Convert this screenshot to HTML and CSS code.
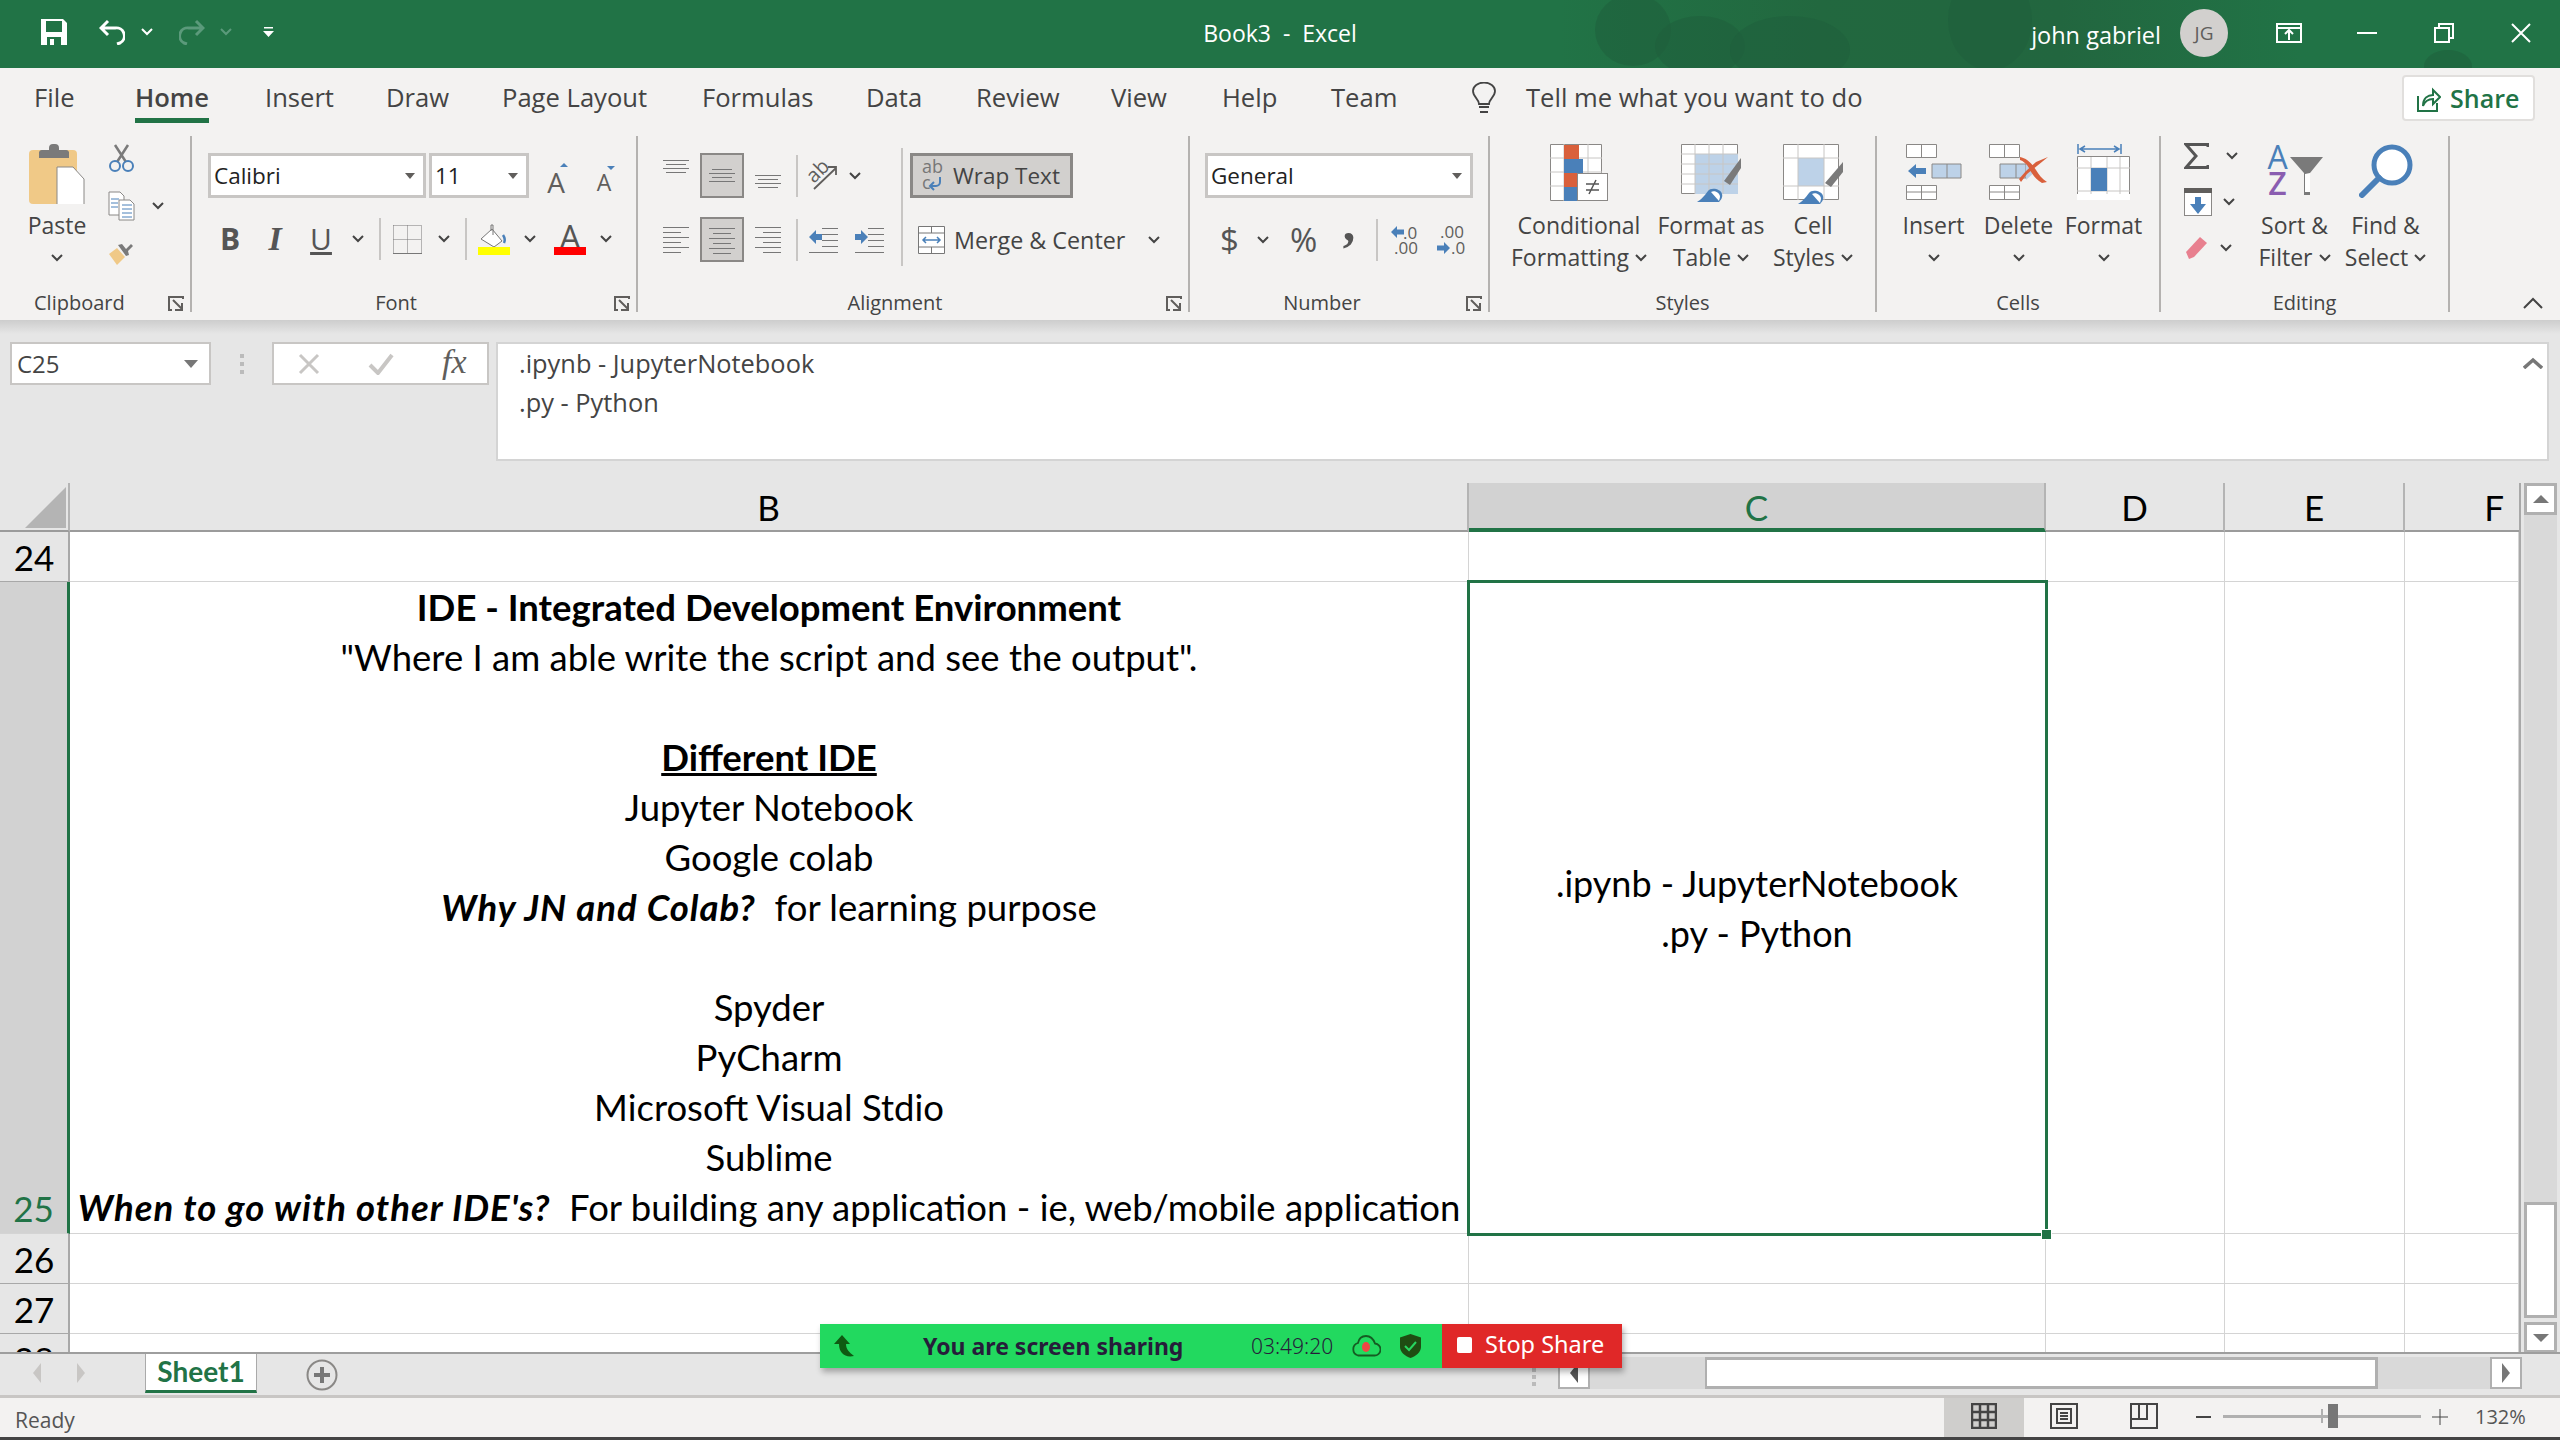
FILE: index.html
```html
<!DOCTYPE html>
<html lang="en">
<head>
<meta charset="utf-8">
<title>Book3 - Excel</title>
<link rel="stylesheet" href="styles.css">
</head>
<body>
<svg class="defs" width="0" height="0">
  <symbol id="chev" viewBox="0 0 12 8"><path d="M1 1l5 5 5-5" fill="none" stroke="currentColor" stroke-width="2"/></symbol>
  <symbol id="launch" viewBox="0 0 16 16"><path d="M15 3V1H1v13h3" fill="none" stroke="#605e5c" stroke-width="2"/><path d="M5 4l9 9M14 7v7H7" fill="none" stroke="#605e5c" stroke-width="2"/></symbol>
</svg>
<div class="app">
  <header class="titlebar">
    <svg class="decor" width="2560" height="68"><g fill="#1f5f3c" fill-opacity=".55"><ellipse cx="1633" cy="30" rx="38" ry="36"/><ellipse cx="1700" cy="46" rx="45" ry="30"/><ellipse cx="1790" cy="50" rx="60" ry="34"/><ellipse cx="1990" cy="20" rx="42" ry="50"/><ellipse cx="2448" cy="66" rx="24" ry="16"/></g></svg>
    <div class="qat">
      <svg width="26" height="26" viewBox="0 0 26 26"><path d="M0 0h22l4 4v22H0z" fill="#fff"/><rect x="5" y="2" width="16" height="11" fill="#217346"/><rect x="6" y="18" width="14" height="8" fill="#217346"/><rect x="9" y="20" width="4" height="6" fill="#fff"/></svg>
      <svg class="ml32" width="26" height="26" viewBox="0 0 26 26"><path d="M9 2L2 9l7 7M2 9h14a8 8 0 0 1 5 15l-3 1" fill="none" stroke="#fff" stroke-width="3"/></svg>
      <svg class="chev-w ml16" width="12" height="8"><use href="#chev"/></svg>
      <svg class="ml26" width="26" height="26" viewBox="0 0 26 26"><path d="M17 2l7 7-7 7M24 9H10a8 8 0 0 0-5 15l3 1" fill="none" stroke="#5b9a7b" stroke-width="3"/></svg>
      <svg class="chev-d ml15" width="12" height="8"><use href="#chev"/></svg>
      <svg class="ml31" width="12" height="10" viewBox="0 0 12 10"><path d="M1 0h9v1.500H1zM0 4h11l-5.500 6z" fill="#fff"/></svg>
    </div>
    <div class="doc">Book3&nbsp; - &nbsp;Excel</div>
    <div class="win">
      <span class="user">john gabriel</span>
      <span class="avatar">JG</span>
      <svg class="ml48" width="26" height="20" viewBox="0 0 26 20"><path d="M1 1h24v18H1zM1 5h24M13 17V8M9 11l4-4 4 4" fill="none" stroke="#fff" stroke-width="2"/></svg>
      <svg class="ml55" width="20" height="20" viewBox="0 0 20 20"><path d="M0 10h20" stroke="#fff" stroke-width="2"/></svg>
      <svg class="ml57" width="20" height="20" viewBox="0 0 20 20"><path d="M1 5h14v14H1zM5 5V1h14v14h-4" fill="none" stroke="#fff" stroke-width="2"/></svg>
      <svg class="ml57" width="20" height="20" viewBox="0 0 20 20"><path d="M1 1l18 18M19 1L1 19" stroke="#fff" stroke-width="2"/></svg>
    </div>
  </header>

  <nav class="tabs">
    <span>File</span><span class="tab-on">Home</span><span>Insert</span><span>Draw</span><span>Page Layout</span><span>Formulas</span><span>Data</span><span>Review</span><span>View</span><span>Help</span><span>Team</span>
    <svg width="24" height="32" viewBox="0 0 24 32"><path d="M7 22c0-5-6-7-6-13a11 8.500 0 0 1 22 0c0 6-6 8-6 13z" fill="none" stroke="#444" stroke-width="1.800"/><path d="M7 25h10M8 30h8" stroke="#444" stroke-width="2"/></svg>
    <span class="tell">Tell me what you want to do</span>
    <button class="share">
      <svg width="24" height="28" viewBox="0 0 24 28"><path d="M1 12v15h19v-8" fill="none" stroke="#217346" stroke-width="2"/><path d="M6 22c0-8 5-11 10-11V6l7 7-7 7v-5c-5 0-8 2-10 7z" fill="none" stroke="#217346" stroke-width="2"/></svg>
      <span>Share</span>
    </button>
  </nav>

  <section class="ribbon">
    <div class="grp g-clip">
      <div class="body pl20">
        <div class="big w74">
          <div class="big-ic">
            <svg width="56" height="60" viewBox="0 0 56 60"><rect y="6" width="48" height="54" rx="4" fill="#f0c987"/><path d="M10 14v-6a3 3 0 0 1 3-2h7V4a4 4 0 0 1 4-4h2a4 4 0 0 1 4 4v2h7a3 3 0 0 1 3 2v6z" fill="#7a7a7a"/><path d="M28 27h16l11 12v32H28z" transform="translate(0 -4)" fill="#fff" stroke="#8a8886"/></svg>
          </div>
          <div class="big-t">Paste</div>
          <div class="big-t cc"><svg width="12" height="8"><use href="#chev"/></svg></div>
        </div>
        <div class="tools ml14">
          <svg width="27" height="28" viewBox="0 0 27 28"><path d="M7 1l11 17M20 1L9 18" stroke="#7a7a7a" stroke-width="2.500"/><circle cx="7" cy="22" r="5" fill="none" stroke="#4a80b9" stroke-width="2"/><circle cx="20" cy="22" r="5" fill="none" stroke="#4a80b9" stroke-width="2"/></svg>
          <div class="tool-row mt19">
            <svg width="27" height="30" viewBox="0 0 27 30"><path d="M1 1h11l4 4v19H1z" fill="#fff" stroke="#8a8886"/><path d="M11 9h11l4 4v16H11z" fill="#fff" stroke="#8a8886"/><path d="M3 8h8M3 12h7M3 16h7M14 14h10M14 18h10M14 22h10M14 26h10" stroke="#4a80b9"/></svg>
            <svg class="ml17" width="12" height="8"><use href="#chev"/></svg>
          </div>
          <svg class="mt22" width="26" height="22" viewBox="0 0 26 22"><path d="M1 11l8-6 8 9-8 8z" fill="#f0c987"/><path d="M11 3l4-1 4 5 5-5 2 2-5 5 1 4-3 1z" transform="translate(-1 -1)" fill="#7a7a7a"/></svg>
        </div>
      </div>
      <div class="label lab-clip">Clipboard</div>
      <svg class="launch" width="16" height="16"><use href="#launch"/></svg>
    </div>

    <div class="grp g-font">
      <div class="body col pl16 pt17">
        <div class="row">
          <div class="combo w218"><span>Calibri</span><i class="caret"></i></div>
          <div class="combo w100 ml3"><span>11</span><i class="caret"></i></div>
          <div class="afont a-lg ml15">A<i class="tri up"></i></div>
          <div class="afont a-sm ml25">A<i class="tri dn"></i></div>
        </div>
        <div class="row mt20">
          <b class="fmt ml7">B</b>
          <i class="fmt fmt-i ml15">I</i>
          <u class="fmt fmt-u ml16">U</u>
          <svg class="ml16" width="12" height="8"><use href="#chev"/></svg>
          <span class="vsep ml15"></span>
          <svg class="ml12" width="29" height="29" viewBox="0 0 29 29"><path d="M.500.500h28M.500 14.500h28M.500.500v28M14.500.500v28M28.500.500v28" stroke="#777" stroke-dasharray="1 1" fill="none"/><path d="M0 28.500h29" stroke="#777"/></svg>
          <svg class="ml16" width="12" height="8"><use href="#chev"/></svg>
          <span class="vsep ml15"></span>
          <svg class="ml11" width="32" height="32" viewBox="0 0 32 32"><path d="M3 16L14 6l10 12-8 6z" fill="#fff" stroke="#777"/><path d="M13 8V2h2v10" fill="none" stroke="#777"/><path d="M25 12c2 3 2 6 1 8" stroke="#4a80b9" stroke-width="2.500" fill="none"/><rect y="24" width="32" height="8" fill="#ff0"/></svg>
          <svg class="ml14" width="12" height="8"><use href="#chev"/></svg>
          <div class="color-a ml18">A<i></i></div>
          <svg class="ml14" width="12" height="8"><use href="#chev"/></svg>
        </div>
      </div>
      <div class="label lab-font">Font</div>
      <svg class="launch" width="16" height="16"><use href="#launch"/></svg>
    </div>

    <div class="grp g-align">
      <div class="body pl25">
        <div class="al-left pt17">
          <div class="row">
            <svg width="26" height="45" viewBox="0 0 26 45"><path d="M0 7.500h26M3 11.500h20M0 15.500h26M3 19.500h20" stroke="#777"/></svg>
            <div class="al-on ml11"><svg width="26" height="41" viewBox="0 0 26 41"><path d="M3 14.500h20M0 18.500h26M3 22.500h20M0 26.500h26" stroke="#777"/></svg></div>
            <svg class="ml11" width="26" height="45" viewBox="0 0 26 45"><path d="M0 22.500h26M3 26.500h20M0 30.500h26M3 34.500h20" stroke="#777"/></svg>
            <span class="vsep ml15"></span>
            <svg class="ml11 ovis" width="29" height="28" viewBox="0 0 29 28"><path d="M5 27L27 6M19 5h8v8" fill="none" stroke="#605e5c" stroke-width="1.800"/><text class="svg-ab" x="-2" y="15" transform="rotate(-45 10 10)">ab</text></svg>
            <svg class="ml11" width="12" height="8"><use href="#chev"/></svg>
          </div>
          <div class="row mt19">
            <svg width="26" height="45" viewBox="0 0 26 45"><path d="M0 11.500h26M0 16.500h18M0 21.500h26M0 26.500h18M0 31.500h26M0 36.500h18" stroke="#777" transform="translate(0 -1)"/></svg>
            <div class="al-on ml11"><svg width="26" height="41" viewBox="0 0 26 41"><path d="M0 9.500h26M4 14.500h18M0 19.500h26M4 24.500h18M0 29.500h26M4 34.500h18" stroke="#777"/></svg></div>
            <svg class="ml11" width="26" height="45" viewBox="0 0 26 45"><path d="M0 10.500h26M8 15.500h18M0 20.500h26M8 25.500h18M0 30.500h26M8 35.500h18" stroke="#777"/></svg>
            <span class="vsep ml15"></span>
            <svg class="ml11" width="29" height="28" viewBox="0 0 29 28"><path d="M13 2.500h16M13 8.500h16M13 14.500h16M13 20.500h16M0 26.500h29" stroke="#777"/><path d="M0 11l7-7v4h6v6H7v4z" fill="#4a80b9"/></svg>
            <svg class="ml17" width="29" height="28" viewBox="0 0 29 28"><path d="M13 2.500h16M13 8.500h16M13 14.500h16M13 20.500h16M0 26.500h29" stroke="#777"/><path d="M13 11L6 4v4H0v6h6v4z" fill="#4a80b9"/></svg>
          </div>
        </div>
        <span class="al-sep"></span>
        <div class="al-right pt17">
          <div class="wrap">
            <svg class="ovis" width="21" height="32" viewBox="0 0 21 32"><text class="svg-ab2" x="0" y="13">ab</text><text class="svg-ab2" x="0" y="29">c</text><path d="M18 17v5a4 4 0 0 1-4 4H8M12 22l-4 4 4 4" fill="none" stroke="#4a80b9" stroke-width="2"/></svg>
            <span>Wrap Text</span>
          </div>
          <div class="merge mt19">
            <svg width="27" height="28" viewBox="0 0 27 28"><path d="M.500.500h26v27H.500zM.500 7h26M.500 21h26M13.500.500V7M13.500 21v6.500" fill="#fff" stroke="#777"/><path d="M5 14h17M8 11l-3 3 3 3M19 11l3 3-3 3" fill="none" stroke="#4a80b9" stroke-width="1.500"/></svg>
            <span class="ml9">Merge &amp; Center</span>
            <svg class="ml23" width="12" height="8"><use href="#chev"/></svg>
          </div>
        </div>
      </div>
      <div class="label lab-align">Alignment</div>
      <svg class="launch" width="16" height="16"><use href="#launch"/></svg>
    </div>

    <div class="grp g-num">
      <div class="body col pl15 pt17">
        <div class="combo w268"><span>General</span><i class="caret"></i></div>
        <div class="row mt19 h45">
          <span class="sym w14 ml15">$</span>
          <svg class="ml23" width="12" height="8"><use href="#chev"/></svg>
          <span class="sym w26 ml21">%</span>
          <b class="sym w14 ml26 comma">,</b>
          <span class="vsep ml20"></span>
          <svg class="ml13 ovis" width="28" height="30" viewBox="0 0 28 30"><path d="M0 7l6-6v3.500h7v5H6V13z" fill="#4a80b9"/><text class="svg-n" x="12" y="14">.0</text><text class="svg-n" x="3" y="29">.00</text></svg>
          <svg class="ml18 ovis" width="28" height="30" viewBox="0 0 28 30"><text class="svg-n" x="3" y="13">.00</text><path d="M13 23l-6-6v3.500H0v5h7V29z" fill="#4a80b9"/><text class="svg-n" x="14" y="29">.0</text></svg>
        </div>
      </div>
      <div class="label lab-num">Number</div>
      <svg class="launch" width="16" height="16"><use href="#launch"/></svg>
    </div>

    <div class="grp g-styles">
      <div class="body pl10">
        <div class="big w158">
          <div class="big-ic">
            <svg width="58" height="58" viewBox="0 0 58 58"><path d="M.500.500h51v56H.500z" fill="#fff" stroke="#8a8886"/><path d="M14 0v57M38 0v57M0 14h52M0 28h52M0 42h52" stroke="#c8c6c4"/><rect x="14" y="1" width="15" height="14" fill="#d9603c"/><rect x="14" y="15" width="19" height="14" fill="#4a80b9"/><rect x="14" y="29" width="20" height="14" fill="#d9603c"/><rect x="14" y="43" width="13" height="14" fill="#4a80b9"/><rect x="27.500" y="40.500" width="30" height="27" transform="translate(0 -11)" fill="#fff" stroke="#8a8886"/><path d="M36 45h13M36 51h13M39 55l7-14" stroke="#555" stroke-width="1.500" transform="translate(0 -5)"/></svg>
          </div>
          <div class="big-t">Conditional</div>
          <div class="big-t">Formatting <svg class="ml6 up1" width="12" height="8"><use href="#chev"/></svg></div>
        </div>
        <div class="big w102 ml2">
          <div class="big-ic">
            <svg width="61" height="58" viewBox="0 0 61 58"><path d="M.500.500h56v49H.500z" fill="#fff" stroke="#8a8886"/><rect x="14" y="10" width="43" height="40" fill="#bdd2e8"/><path d="M14 0v50M28 0v50M42 0v50M0 10h57M0 20h57M0 30h57M0 40h57" stroke="#c8c6c4"/><path d="M43 37L60 14v10L49 41z" fill="#7a7a7a"/><path d="M16 58c4-2 8-7 11-11 3-4 13-2 14 3 1 3-1 6-3 8z" fill="#4a80b9"/><path d="M30 48c4-2 9 1 9 5l-1 4z" fill="#fff"/></svg>
          </div>
          <div class="big-t">Format as</div>
          <div class="big-t">Table <svg class="ml6 up1" width="12" height="8"><use href="#chev"/></svg></div>
        </div>
        <div class="big w102">
          <div class="big-ic">
            <svg width="60" height="60" viewBox="0 0 60 60"><path d="M.500.500h55v55H.500z" fill="#fff" stroke="#8a8886"/><rect x="15" y="14" width="26" height="28" fill="#bdd2e8"/><path d="M15 0v56M41 0v56M0 14h56M0 42h56" stroke="#c8c6c4"/><path d="M42 39L60 18v10L48 43z" fill="#7a7a7a"/><path d="M15 60c4-2 8-7 11-11 3-4 13-2 14 3 1 3-1 6-3 8z" fill="#4a80b9"/><path d="M29 50c4-2 9 1 9 5l-1 4z" fill="#fff"/></svg>
          </div>
          <div class="big-t">Cell</div>
          <div class="big-t">Styles <svg class="ml6 up1" width="12" height="8"><use href="#chev"/></svg></div>
        </div>
      </div>
      <div class="label">Styles</div>
    </div>

    <div class="grp g-cells">
      <div class="body pl14">
        <div class="big w85">
          <div class="big-ic">
            <svg width="56" height="56" viewBox="0 0 56 56"><g fill="#fff" stroke="#8a8886"><path d="M.500.500h30v13H.500zM15.500.500v13M.500 41.500h30v14H.500zM.500 48h30M15.500 41.500v14"/></g><path d="M26 20h29v14H26zM41 20v14" fill="#bdd2e8" stroke="#8a8886"/><path d="M2 27l8-7v4h10v6H10v4z" fill="#4a80b9"/></svg>
          </div>
          <div class="big-t">Insert</div>
          <div class="big-t cc"><svg width="12" height="8"><use href="#chev"/></svg></div>
        </div>
        <div class="big w85">
          <div class="big-ic">
            <svg width="60" height="56" viewBox="0 0 60 56"><g fill="#fff" stroke="#8a8886"><path d="M.500.500h30v13H.500zM15.500.500v13M.500 41.500h30v14H.500zM.500 48h30M15.500 41.500v14"/></g><path d="M11 20h26v14H11zM27 20v14" fill="#bdd2e8" stroke="#8a8886"/><path d="M37 18l10 9-10 9z" fill="#bdd2e8"/><path d="M31 13c6 1 12 6 16 13 3 5 6 9 11 12l-5 1C47 36 43 30 40 24c-2-4-6-7-9-8zM59 13L38 30l-6 8-2-3 7-8 10-9z" fill="#d9603c"/></svg>
          </div>
          <div class="big-t">Delete</div>
          <div class="big-t cc"><svg width="12" height="8"><use href="#chev"/></svg></div>
        </div>
        <div class="big w85">
          <div class="big-ic">
            <svg width="54" height="56" viewBox="0 0 54 56"><path d="M1 0v10M44 0v10M3 5h39M8 2L3 5l5 3M37 2l5 3-5 3" fill="none" stroke="#4a80b9" stroke-width="1.500"/><path d="M.500 12.500h52v46H.500z" fill="#fff" stroke="#8a8886"/><path d="M14 13v44M30 13v44M43 13v44M0 24h53M0 47h53" stroke="#c8c6c4"/><rect x="14" y="24" width="16" height="23" fill="#4a80b9"/><path d="M0 50h53v6H36l-4 4H0z" fill="#fff"/></svg>
          </div>
          <div class="big-t">Format</div>
          <div class="big-t cc"><svg width="12" height="8"><use href="#chev"/></svg></div>
        </div>
      </div>
      <div class="label">Cells</div>
    </div>

    <div class="grp g-edit">
      <div class="body pl23">
        <div class="edit-tools">
          <div class="edit-row">
            <svg width="25" height="26" viewBox="0 0 25 26"><path d="M24 4V1.500H2L12 13 2 24.500h22V22" fill="none" stroke="#555" stroke-width="3"/></svg>
            <svg class="ml17" width="12" height="8"><use href="#chev"/></svg>
          </div>
          <div class="edit-row">
            <svg width="28" height="28" viewBox="0 0 28 28"><rect x=".5" y=".5" width="27" height="27" fill="#fff" stroke="#8a8886"/><rect width="28" height="5" fill="#605e5c"/><path d="M11 9h6v7h5l-8 10-8-10h5z" fill="#4a80b9"/></svg>
            <svg class="ml11" width="12" height="8"><use href="#chev"/></svg>
          </div>
          <div class="edit-row">
            <svg width="24" height="24" viewBox="0 0 24 24"><path d="M2 16L16 1l7 6L10 21l-5 2z" fill="#e8808f"/></svg>
            <svg class="ml12" width="12" height="8"><use href="#chev"/></svg>
          </div>
        </div>
        <div class="big w91">
          <div class="big-ic">
            <div class="sort-ic">
              <div class="az"><span class="az-a">A</span><span class="az-z">Z</span></div>
              <svg width="33" height="38" viewBox="0 0 33 38"><path d="M0 0h33L20 16v22h-6V16z" fill="#7a7a7a"/><path d="M14 17v18h5V16" fill="#fff" transform="translate(1 0)"/></svg>
            </div>
          </div>
          <div class="big-t">Sort &amp;</div>
          <div class="big-t">Filter <svg class="ml6 up1" width="12" height="8"><use href="#chev"/></svg></div>
        </div>
        <div class="big w91">
          <div class="big-ic">
            <svg width="54" height="54" viewBox="0 0 54 54"><circle cx="33" cy="21" r="18" fill="#fff" stroke="#4a80b9" stroke-width="5"/><path d="M20 34L3 51" stroke="#4a80b9" stroke-width="6" stroke-linecap="round"/></svg>
          </div>
          <div class="big-t">Find &amp;</div>
          <div class="big-t">Select <svg class="ml6 up1" width="12" height="8"><use href="#chev"/></svg></div>
        </div>
      </div>
      <div class="label">Editing</div>
    </div>

    <div class="collapse">
      <svg width="20" height="12" viewBox="0 0 20 12"><path d="M1 11l9-9 9 9" fill="none" stroke="#444" stroke-width="2"/></svg>
    </div>
  </section>

  <section class="formula">
    <div class="namebox"><span>C25</span><i class="caret caret-g"></i></div>
    <div class="fdots"><i></i><i></i><i></i></div>
    <div class="fbtns">
      <svg width="22" height="22" viewBox="0 0 22 22"><path d="M2 2l18 18M20 2L2 20" stroke="#c8c6c4" stroke-width="3"/></svg>
      <svg width="26" height="22" viewBox="0 0 26 22"><path d="M2 12l8 8L24 2" fill="none" stroke="#c8c6c4" stroke-width="4"/></svg>
      <span class="fx">fx</span>
    </div>
    <div class="fbox">
      <div>.ipynb - JupyterNotebook</div>
      <div>.py - Python</div>
      <svg class="fup" width="20" height="12" viewBox="0 0 20 12"><path d="M1 11l9-8 9 8" fill="none" stroke="#777" stroke-width="3.500"/></svg>
    </div>
  </section>

  <section class="sheet">
    <div class="grid">
      <div class="corner"><i></i></div>
      <div class="ch">B</div>
      <div class="ch ch-on">C</div>
      <div class="ch">D</div>
      <div class="ch">E</div>
      <div class="ch ch-f">F</div>

      <div class="rh">24</div><div class="c"></div><div class="c"></div><div class="c"></div><div class="c"></div><div class="c"></div>

      <div class="rh rh-on">25</div>
      <div class="c cell-b">
        <div><b>IDE - Integrated Development Environment</b></div>
        <div>"Where I am able write the script and see the output".</div>
        <div>&nbsp;</div>
        <div><b><u>Different IDE</u></b></div>
        <div>Jupyter Notebook</div>
        <div>Google colab</div>
        <div><b><em>Why JN and Colab?</em></b>  for learning purpose</div>
        <div>&nbsp;</div>
        <div>Spyder</div>
        <div>PyCharm</div>
        <div>Microsoft Visual Stdio</div>
        <div>Sublime</div>
        <div><b><em>When to go with other IDE's?</em></b>  For building any application - ie, web/mobile application</div>
      </div>
      <div class="c cell-c">
        <div>.ipynb - JupyterNotebook</div>
        <div>.py - Python</div>
        <i class="handle"></i>
      </div>
      <div class="c"></div><div class="c"></div><div class="c"></div>

      <div class="rh">26</div><div class="c"></div><div class="c"></div><div class="c"></div><div class="c"></div><div class="c"></div>
      <div class="rh">27</div><div class="c"></div><div class="c"></div><div class="c"></div><div class="c"></div><div class="c"></div>
      <div class="rh">28</div><div class="c"></div><div class="c"></div><div class="c"></div><div class="c"></div><div class="c"></div>
    </div>
    <div class="vscroll">
      <div class="sbtn"><i class="tri-g up-g"></i></div>
      <div class="vtrack"></div>
      <div class="vthumb"></div>
      <div class="sbtn sbtn-d"><i class="tri-g dn-g"></i></div>
    </div>
  </section>

  <section class="sheetbar">
    <div class="nav"><i class="arr-l"></i><i class="arr-r"></i></div>
    <div class="sheet-tab">Sheet1</div>
    <div class="add">
      <svg width="32" height="32" viewBox="0 0 32 32"><circle cx="16" cy="16" r="14.500" fill="none" stroke="#8a8886" stroke-width="2"/><path d="M16 8v16M8 16h16" stroke="#777" stroke-width="4"/></svg>
    </div>
    <div class="hdots"><i></i><i></i><i></i></div>
    <div class="hscroll">
      <div class="hbtn"><i class="arr-l dark"></i></div>
      <div class="htrack-a"></div>
      <div class="hthumb"></div>
      <div class="htrack-b"></div>
      <div class="hbtn"><i class="arr-r dark"></i></div>
    </div>
  </section>

  <footer class="status">
    <span class="ready">Ready</span>
    <div class="view view-on"><svg width="26" height="26" viewBox="0 0 26 26"><path d="M1 1h24v24H1zM9 1v24M17 1v24M1 9h24M1 17h24" fill="none" stroke="#444" stroke-width="2.500"/></svg></div>
    <div class="view"><svg width="28" height="26" viewBox="0 0 28 26"><path d="M1 1h26v24H1zM7 6h14v14H7z" fill="none" stroke="#444" stroke-width="2"/><path d="M10 10h8M10 13h8M10 16h8" stroke="#444" stroke-width="2"/></svg></div>
    <div class="view"><svg width="28" height="26" viewBox="0 0 28 26"><path d="M1 1h26v24H1zM1 16h16V1M9 1v15" fill="none" stroke="#444" stroke-width="2"/></svg></div>
    <div class="zoom">
      <i class="z-minus"></i>
      <div class="z-track"><i class="z-tick"></i><i class="z-thumb"></i></div>
      <svg width="16" height="16" viewBox="0 0 16 16"><path d="M8 0v16M0 8h16" stroke="#444"/></svg>
      <span class="z-pct">132%</span>
    </div>
  </footer>
  <div class="strip"></div>

  <aside class="sharebar">
    <div class="sb-green">
      <svg class="sb-arrow" width="21" height="22" viewBox="0 0 21 22"><path d="M8 0l8 9h-4c0 5 3 8 8 12-9 2-15-3-15-12H0z" fill="#0f5a12"/></svg>
      <b class="sb-text">You are screen sharing</b>
      <span class="sb-time">03:49:20</span>
      <svg class="sb-cloud" width="30" height="22" viewBox="0 0 30 22"><path d="M7 20.500h16a6 6 0 0 0 1-12C22 3 19 1 15 1S8 3 7 8a6.500 6.500 0 0 0 0 12.500z" fill="none" stroke="#155c22" stroke-width="1.800"/><ellipse cx="15" cy="12" rx="4" ry="5" fill="#f04444"/></svg>
      <svg class="sb-shield" width="21" height="24" viewBox="0 0 21 24"><path d="M10.500 0L21 3.500V13c0 5-5 9-10.500 11C5 22 0 18 0 13V3.500z" fill="#1f4d12"/><path d="M5 12l4 4 7-8" fill="none" stroke="#27d65f" stroke-width="2"/></svg>
    </div>
    <div class="sb-red"><i></i><span>Stop Share</span></div>
  </aside>
</div>
</body>
</html>
```

FILE: styles.css
```css
* { box-sizing: border-box; }
html, body { margin: 0; padding: 0; }
body { width: 2560px; height: 1440px; overflow: hidden; background: #f3f2f1; font-family: "Open Sans", "Noto Sans", sans-serif; color: #444; }
svg { display: block; flex: none; }
.ovis { overflow: visible; }
.defs { position: absolute; }
.app { position: relative; width: 2560px; height: 1440px; display: flex; flex-direction: column; }

/* spacing helpers */
.ml2{margin-left:2px}.ml3{margin-left:3px}.ml6{margin-left:6px}.ml7{margin-left:7px}.ml9{margin-left:9px}.ml11{margin-left:11px}.ml12{margin-left:12px}.ml13{margin-left:13px}.ml14{margin-left:14px}.ml15{margin-left:15px}.ml16{margin-left:16px}.ml17{margin-left:17px}.ml18{margin-left:18px}.ml20{margin-left:20px}.ml21{margin-left:21px}.ml23{margin-left:23px}.ml25{margin-left:25px}.ml26{margin-left:26px}.ml31{margin-left:31px}.ml32{margin-left:32px}.ml48{margin-left:48px}.ml55{margin-left:55px}.ml57{margin-left:57px}
.mt19{margin-top:19px}.mt20{margin-top:20px}.mt22{margin-top:22px}
.pl10{padding-left:10px}.pl14{padding-left:14px}.pl15{padding-left:15px}.pl16{padding-left:16px}.pl20{padding-left:20px}.pl23{padding-left:23px}.pl25{padding-left:25px}
.pt17{padding-top:17px}
.w14{width:14px}.w26{width:26px}.w74{width:74px}.w85{width:85px}.w91{width:91px}.w100{width:100px}.w102{width:102px}.w158{width:158px}.w218{width:218px}.w268{width:268px}
.h45{height:45px}

/* title bar */
.titlebar { position: relative; height: 68px; flex: none; display: grid; grid-template-columns: 1fr auto 1fr; align-items: center; color: #fff; background: linear-gradient(90deg, #217346 0, #217346 1560px, #22683f 1820px, #22663f 2060px, #217346 2300px, #217346 2560px); }
.decor { position: absolute; left: 0; top: 0; }
.qat { position: relative; display: flex; align-items: center; padding-left: 41px; margin-top: -4px; }
.chev-w { color: #fff; }
.chev-d { color: #5b9a7b; }
.doc { position: relative; font-size: 23px; line-height: 68px; margin-top: -2px; height: 68px; }
.win { position: relative; display: flex; align-items: center; justify-content: flex-end; padding-right: 29px; margin-top: -2px; }
.user { font-size: 23.500px; margin-top: 4px; }
.avatar { width: 48px; height: 48px; margin-left: 19px; border-radius: 50%; background: #d2d0ce; color: #605e5c; font-size: 19px; display: flex; align-items: center; justify-content: center; }

/* tabs */
.tabs { height: 64px; flex: none; display: grid; grid-template-columns: 101px 130px 121px 116px 200px 164px 110px 135px 111px 109px 141px 54px 876px 133px; align-items: center; padding: 0 0 4px 34px; font-size: 25.600px; color: #444; }
.tabs > span { line-height: 60px; white-space: nowrap; }
.tab-on { position: relative; font-weight: 600; justify-self: start; }
.tab-on::after { content: ""; position: absolute; left: 0; right: 0; bottom: 5px; height: 5px; background: #217346; }
.share { width: 133px; height: 46px; margin: 0; padding: 0 0 0 13px; border: 2px solid #e1dfdd; border-radius: 4px; background: #fff; display: flex; align-items: center; gap: 9px; color: #217346; font: 600 25px "Open Sans", sans-serif; }

/* ribbon */
.ribbon { height: 188px; flex: none; display: flex; padding-top: 4px; font-size: 23px; color: #444; }
.grp { position: relative; height: 176px; display: flex; flex-direction: column; border-right: 2px solid #b4b2b0; flex: none; }
.g-clip { width: 192px; } .g-font { width: 446px; } .g-align { width: 552px; } .g-num { width: 300px; } .g-styles { width: 387px; } .g-cells { width: 284px; } .g-edit { width: 289px; }
.body { flex: 1; display: flex; min-height: 0; }
.col { flex-direction: column; }
.label { height: 24px; margin-bottom: -3px; line-height: 24px; text-align: center; font-size: 20px; color: #444; }
.lab-clip { text-align: left; padding-left: 34px; }
.lab-font { padding-right: 36px; }
.lab-align { padding-right: 36px; }
.lab-num { padding-right: 34px; }
.launch { position: absolute; right: 6px; bottom: 0; }
.row { display: flex; align-items: center; }
.big { display: flex; flex-direction: column; align-items: center; flex: none; }
.big-ic { height: 73px; padding-top: 8px; display: flex; justify-content: center; }
.big-t { height: 32px; line-height: 32px; white-space: nowrap; display: flex; align-items: center; justify-content: center; }
.up1 { margin-top: 2px; }
.cc { height: 34px; }
.tools { display: flex; flex-direction: column; padding-top: 8px; }
.tool-row { display: flex; align-items: center; }
.combo { height: 45px; border: 3px solid #c8c6c4; background: #fff; display: flex; align-items: center; justify-content: space-between; padding: 0 8px 0 3px; font-size: 22.500px; color: #222; flex: none; }
.caret { display: block; width: 0; height: 0; border-left: 5px solid transparent; border-right: 5px solid transparent; border-top: 6px solid #605e5c; }
.afont { position: relative; color: #605e5c; flex: none; line-height: 1; text-align: center; }
.a-lg { font-size: 28px; width: 24px; margin-top: 12px; }
.a-sm { font-size: 23px; width: 22px; margin-top: 14px; }
.tri { position: absolute; right: 0; top: -5px; width: 0; height: 0; border-left: 4px solid transparent; border-right: 4px solid transparent; }
.tri.up { border-bottom: 4px solid #4a80b9; right: 0; }
.tri.dn { border-top: 4px solid #4a80b9; top: -5px; }
.fmt { width: 30px; text-align: center; font-size: 30px; line-height: 1; color: #555; flex: none; font-family: "Open Sans", sans-serif; }
.fmt-i { font-family: "Liberation Serif", serif; font-weight: 700; font-size: 34px; }
.vsep { display: block; width: 2px; height: 42px; background: #c8c6c4; flex: none; }
.color-a { position: relative; width: 32px; height: 32px; text-align: center; font-size: 34px; line-height: 28px; color: #555; flex: none; overflow: hidden; }
.color-a i { position: absolute; left: 0; bottom: 0; width: 32px; height: 8px; background: #f00; }
.al-left { width: 238px; flex: none; }
.al-on { width: 44px; height: 45px; border: 2px solid #8a8886; background: #d2d0ce; display: flex; justify-content: center; flex: none; }
.al-sep { display: block; width: 2px; height: 118px; margin-top: 12px; background: #c8c6c4; flex: none; }
.al-right { margin-left: 7px; flex: none; }
.wrap { width: 163px; height: 45px; border: 3px solid #8a8886; background: #d2d0ce; display: flex; align-items: center; gap: 10px; padding-left: 9px; white-space: nowrap; font-size: 22.500px; }
.merge { height: 45px; display: flex; align-items: center; padding-left: 8px; white-space: nowrap; font-size: 23.300px; }
.svg-ab { font: 20px "Open Sans", sans-serif; fill: #605e5c; }
.svg-ab2 { font: 18px "Open Sans", sans-serif; fill: #777; }
.svg-n { font: 17px "Open Sans", sans-serif; fill: #605e5c; }
.sym { display: block; text-align: center; font-size: 33px; color: #555; flex: none; line-height: 1; }
.comma { font-family: "Liberation Serif", serif; font-size: 50px; line-height: 20px; margin-top: -34px; font-weight: 700; }
.edit-tools { width: 65px; flex: none; display: flex; flex-direction: column; gap: 6px; }
.edit-row { height: 40px; display: flex; align-items: center; }
.sort-ic { display: flex; gap: 1px; }
.az { display: flex; flex-direction: column; width: 22px; font-weight: 400; line-height: 26px; text-align: center; }
.az-a { color: #4a80b9; font-size: 32px; }
.az-z { color: #8a5db0; font-size: 32px; font-weight: 600; }
.sort-ic svg { margin-top: 13px; }
.collapse { flex: 1; display: flex; justify-content: flex-end; align-items: flex-end; padding: 0 17px 3px 0; height: 176px; }

/* formula bar */
.formula { height: 163px; flex: none; display: flex; align-items: flex-start; padding: 22px 0 0 10px; background: linear-gradient(#cdcdcd 0, #e6e6e6 14px); }
.namebox { width: 201px; height: 43px; border: 2px solid #c8c6c4; background: #fff; display: flex; align-items: center; justify-content: space-between; padding: 0 11px 0 5px; font-size: 24px; color: #444; flex: none; }
.caret-g { border-left-width: 7px; border-right-width: 7px; border-top-width: 8px; border-top-color: #777; }
.fdots { width: 61px; height: 43px; display: flex; flex-direction: column; align-items: center; justify-content: center; gap: 4px; flex: none; }
.fdots i { display: block; width: 4px; height: 4px; background: #bbb; }
.fbtns { width: 217px; height: 43px; border: 2px solid #c8c6c4; background: #fff; display: flex; align-items: center; gap: 48px; padding-left: 24px; flex: none; }
.fx { font: italic 34px "Liberation Serif", serif; color: #605e5c; line-height: 1; margin-top: -4px; }
.fbox { position: relative; width: 2053px; height: 119px; margin-left: 7px; border: 2px solid #d4d4d4; background: #fff; padding: 0 0 0 21px; font-size: 25.400px; line-height: 39px; color: #444; flex: none; }
.fup { position: absolute; right: 4px; top: 13px; }

/* sheet */
.sheet { height: 869px; flex: none; display: flex; background: #e6e6e6; }
.grid { width: 2521px; height: 869px; overflow: hidden; display: grid; grid-template-columns: 70px 1399px 577px 179px 180px 114px; grid-template-rows: 49px 50px 652px 50px 50px 50px; font-family: "Lato", "Open Sans", sans-serif; color: #000; border-right: 2px solid #a8a8a8; background: #fff; flex: none; }
.corner { position: relative; background: #e6e6e6; border-right: 2px solid #b4b4b4; border-bottom: 2px solid #9b9b9b; }
.corner i { position: absolute; left: 25px; bottom: 2px; width: 41px; height: 41px; background: #b4b4b4; clip-path: polygon(100% 0, 100% 100%, 0 100%); }
.ch { background: #e6e6e6; border-right: 2px solid #b4b4b4; border-bottom: 2px solid #9b9b9b; text-align: center; font-size: 35px; line-height: 48px; overflow: hidden; }
.ch-on { background: #d2d2d2; color: #217346; border-bottom: 4px solid #217346; }
.ch-f { border-right: 0; text-align: right; padding-right: 15px; }
.rh { background: #e6e6e6; border-right: 2px solid #a8a8a8; border-bottom: 1px solid #a8a8a8; text-align: center; font-size: 35px; line-height: 50px; }
.rh-on { background: #d2d2d2; color: #217346; border-right: 3px solid #217346; border-bottom: 1px solid #d4d4d4; display: flex; align-items: flex-end; justify-content: center; }
.c { border-right: 1px solid #d4d4d4; border-bottom: 1px solid #d4d4d4; background: #fff; }
.cell-b { display: flex; flex-direction: column; justify-content: flex-end; text-align: center; font-size: 36.500px; line-height: 50px; white-space: pre; padding-bottom: 1px; overflow: hidden; }
.cell-b em { letter-spacing: 1px; }
.cell-c { position: relative; display: flex; flex-direction: column; justify-content: center; text-align: center; font-size: 36px; line-height: 50px; outline: 3px solid #217346; outline-offset: -1px; z-index: 1; }
.handle { position: absolute; right: -6px; bottom: -6px; width: 9px; height: 9px; background: #217346; outline: 1px solid #fff; }
.vscroll { width: 39px; display: flex; flex-direction: column; padding-left: 3px; flex: none; }
.sbtn { width: 33px; height: 32px; flex: none; border: 3px solid #b0b0b0; background: #fff; display: flex; align-items: center; justify-content: center; }
.sbtn-d { height: 30px; margin-top: 4px; border-bottom-width: 2px; }
.vtrack { flex: 1; width: 33px; background: #d9d9d9; }
.vthumb { width: 33px; height: 116px; flex: none; background: #fff; border: 3px solid #b0b0b0; }
.tri-g { display: block; width: 0; height: 0; border-left: 8px solid transparent; border-right: 8px solid transparent; }
.up-g { border-bottom: 8px solid #777; }
.dn-g { border-top: 8px solid #777; }

/* sheet bar */
.sheetbar { height: 43px; flex: none; display: flex; background: #e6e6e6; border-top: 2px solid #9e9e9e; }
.nav { width: 145px; display: flex; align-items: center; padding: 0 0 4px 33px; gap: 36px; flex: none; }
.arr-l, .arr-r { display: block; width: 0; height: 0; border-top: 10px solid transparent; border-bottom: 10px solid transparent; }
.arr-l { border-right: 8px solid #c8c6c4; }
.arr-r { border-left: 8px solid #c8c6c4; }
.arr-l.dark { border-right-color: #555; }
.arr-r.dark { border-left-color: #777; }
.sheet-tab { width: 112px; height: 39px; flex: none; background: #fff; border-left: 1px solid #aaa; border-right: 1px solid #aaa; border-bottom: 3px solid #217346; color: #217346; font: 700 28px/34px "Lato", sans-serif; text-align: center; }
.add { width: 98px; display: flex; align-items: center; padding: 0 0 0 49px; flex: none; }
.hdots { width: 1203px; flex: none; display: flex; flex-direction: column; gap: 3px; align-items: flex-end; justify-content: center; padding: 4px 22px 0 0; }
.hdots i { display: block; width: 4px; height: 4px; background: #bbb; }
.hscroll { display: flex; height: 32px; margin-top: 3px; width: 964px; flex: none; }
.hbtn { width: 32px; height: 32px; background: #fff; border: 2px solid #b0b0b0; display: flex; align-items: center; justify-content: center; flex: none; }
.htrack-a { width: 115px; background: #d9d9d9; flex: none; }
.hthumb { width: 673px; background: #fff; border: 3px solid #b0b0b0; border-left-width: 2px; flex: none; }
.htrack-b { width: 112px; background: #d9d9d9; flex: none; }

/* status */
.status { height: 42px; flex: none; display: flex; align-items: stretch; background: #f3f2f1; border-top: 3px solid #c8c6c4; }
.ready { width: 1944px; padding-left: 15px; font-size: 21px; line-height: 44px; color: #555; flex: none; }
.view { width: 80px; display: flex; align-items: center; justify-content: center; flex: none; padding-bottom: 4px; }
.view-on { background: #cfcecc; }
.zoom { display: flex; align-items: center; margin-left: 12px; padding-bottom: 2px; }
.z-minus { display: block; width: 15px; height: 2px; background: #444; }
.z-track { position: relative; width: 198px; height: 3px; margin: 0 11px 0 12px; background: #b0b0b0; }
.z-tick { position: absolute; left: 98px; top: -6px; width: 2px; height: 14px; background: #b0b0b0; }
.z-thumb { position: absolute; left: 105px; top: -11px; width: 10px; height: 24px; background: #777; }
.z-pct { margin-left: 27px; font-size: 20px; color: #555; }
.strip { height: 3px; flex: none; background: #444; }

/* screen share */
.sharebar { position: absolute; left: 820px; top: 1324px; width: 802px; height: 44px; display: flex; box-shadow: 2px 4px 6px rgba(0,0,0,.3); font-family: "Noto Sans", sans-serif; }
.sb-green { width: 622px; height: 44px; background: #22d95f; position: relative; display: flex; align-items: center; flex: none; }
.sb-arrow { margin-left: 14px; }
.sb-text { margin-left: 68px; width: 260px; font-size: 23px; color: #261d3a; white-space: nowrap; }
.sb-time { margin-left: 68px; width: 81px; font-size: 21px; color: #261d3a; font-weight: 300; }
.sb-cloud { margin-left: 19px; }
.sb-shield { margin-left: 19px; }
.sb-red { flex: 1; background: #e02828; color: #fff; display: flex; align-items: center; padding-left: 15px; gap: 13px; font-size: 23.500px; }
.sb-red i { display: block; width: 15px; height: 16px; background: #fff; border-radius: 2px; margin-top: -2px; }
.sb-red span { margin-top: -4px; }
```
